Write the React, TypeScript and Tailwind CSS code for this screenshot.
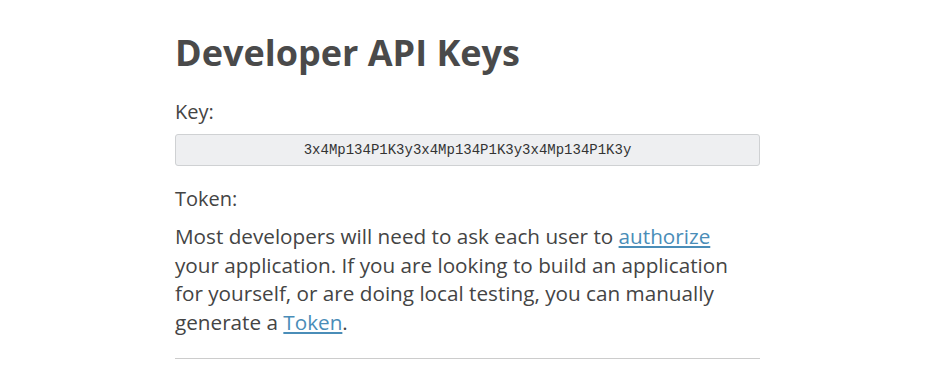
const App: React.FC = () => {
  return (
    <div className="min-h-[385px] w-full bg-white font-['Open_Sans',sans-serif] text-[#444]">
      <div className="ml-[175px] w-[585px] pt-[29px]">
        <h1 className="text-[36px] font-bold leading-[48px] text-[#4a4a4a]">
          Developer API Keys
        </h1>
        <p className="mt-[23px] text-[20px] leading-[24px]">Key:</p>
        <input
          readOnly
          value="3x4Mp134P1K3y3x4Mp134P1K3y3x4Mp134P1K3y"
          className="mt-[10px] block h-[32px] w-full rounded-[3px] border border-[#cfd1d3] bg-[#eeeff1] text-center font-['Liberation_Mono',monospace] text-[14px] text-[#333] outline-none"
        />
        <p className="mt-[19px] text-[20px] leading-[28px]">Token:</p>
        <p className="mt-[9px] text-[20.7px] leading-[28.7px]">
          Most developers will need to ask each user to{" "}
          <a href="#" className="text-[#4a8db8] underline">
            authorize
          </a>
          <br />
          your application. If you are looking to build an application
          <br />
          for yourself, or are doing local testing, you can manually
          <br />
          generate a{" "}
          <a href="#" className="text-[#4a8db8] underline">
            Token
          </a>
          .
        </p>
        <hr className="mt-[21px] border-t border-[#cccccc]" />
      </div>
    </div>
  );
};

export default App;
